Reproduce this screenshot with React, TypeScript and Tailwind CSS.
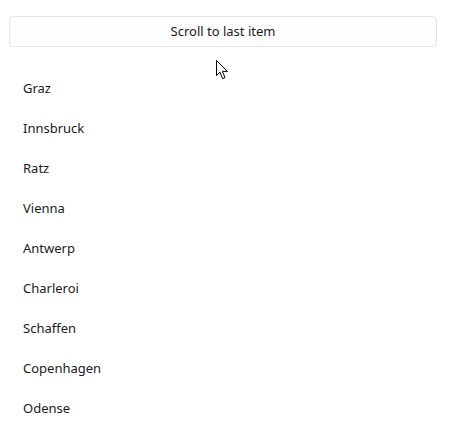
const cities = ['Graz', 'Innsbruck', 'Ratz', 'Vienna', 'Antwerp', 'Charleroi', 'Schaffen', 'Copenhagen', 'Odense'];

export default function App() {
  return (
    <div className="relative h-[437px] w-[452px] overflow-hidden bg-white text-[#1b1b1b]" style={{ fontFamily: '"Segoe UI", "Noto Sans", "Open Sans", sans-serif' }}>
      <div className="pl-[9px] pr-[15px] pt-[16px]">
        <button className="flex h-[31px] w-full items-center justify-center rounded-[4px] border border-[#e5e5e5] bg-[#fdfdfd] text-[13px] text-[#1b1b1b]">
          Scroll to last item
        </button>
      </div>

      <ul className="mt-[22px]">
        {cities.map((city) => (
          <li key={city} className="flex h-[40px] items-center pl-[23px] text-[13px]">
            {city}
          </li>
        ))}
      </ul>

      {/* mouse pointer */}
      <svg className="absolute left-[216px] top-[60px]" width="14" height="20" viewBox="0 0 14 20">
        <path d="M0.5 0.5 L0.5 15.5 L4 12.2 L6.6 18.6 L9 17.6 L6.4 11.4 L11.5 11.4 Z" fill="#fff" stroke="#000" strokeWidth="1" strokeLinejoin="miter" />
      </svg>
    </div>
  );
}
